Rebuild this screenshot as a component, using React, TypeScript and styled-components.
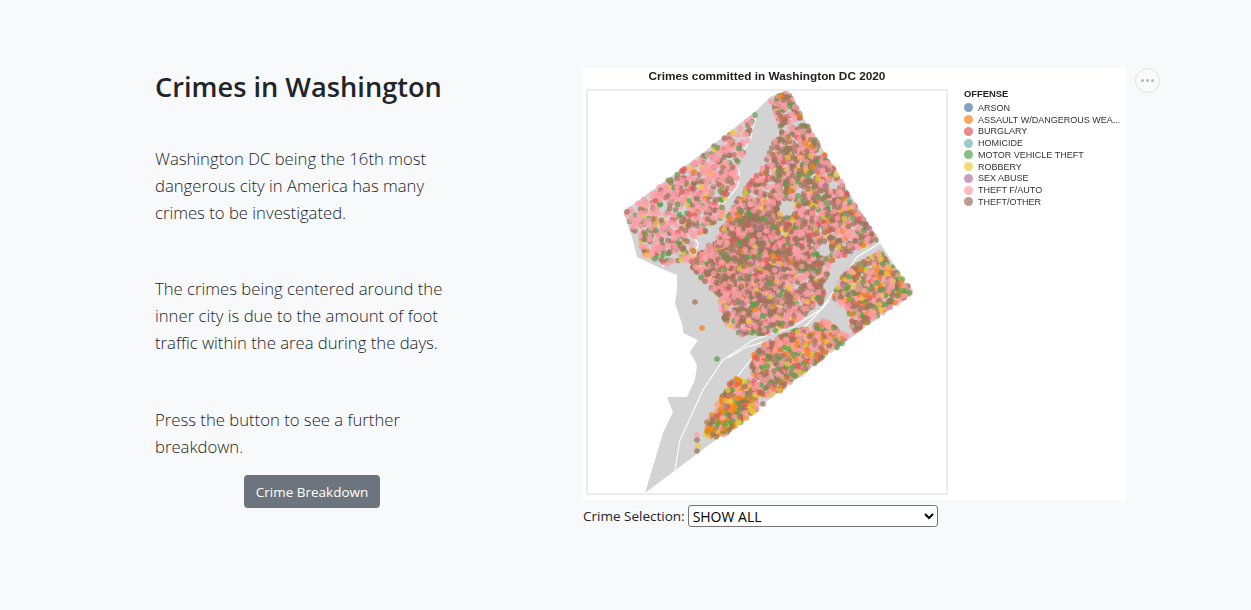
import styled, { createGlobalStyle } from 'styled-components';

type Pt = [number, number];

const OFFENSES = [
  { name: 'ARSON', color: '#4c78a8' },
  { name: 'ASSAULT W/DANGEROUS WEA...', color: '#f58518' },
  { name: 'BURGLARY', color: '#e45756' },
  { name: 'HOMICIDE', color: '#72b7b2' },
  { name: 'MOTOR VEHICLE THEFT', color: '#54a24b' },
  { name: 'ROBBERY', color: '#eeca3b' },
  { name: 'SEX ABUSE', color: '#b279a2' },
  { name: 'THEFT F/AUTO', color: '#ff9da6' },
  { name: 'THEFT/OTHER', color: '#9d755d' },
];

// coordinates below are page pixels, the svg viewBox lines them up
const DISTRICT: Pt[] = [
  [785, 91], [803, 117], [880, 243], [912, 292], [645, 493], [663, 433], [673, 412], [667, 397],
  [687, 397], [695, 380], [697, 365], [690, 352], [698, 340], [683, 333], [683, 327], [675, 303], [677, 290],
  [677, 275], [660, 268], [637, 257], [632, 237], [623, 212], [700, 155], [757, 110], [770, 97],
];

const ROADS = [
  'M757 113 L750 140 L737 163 L735 183 L720 203 L712 225',
  'M880 243 L857 257 L837 287 L820 310 L793 327 L753 340 L723 360 L703 390 L680 440 L675 470',
  'M830 300 L800 332 L747 347 L728 358',
  'M737 377 L753 357',
  'M733 160 Q745 175 735 190 L722 205',
  'M667 240 L663 267',
  'M693 238 Q702 243 695 250',
  'M623 212 L630 235 L636 256',
  'M796 205 L798 232 L812 236',
  'M845 300 L862 276 L875 268',
  'M762 325 L780 310',
  'M826 350 L838 362',
];

// weights follow the OFFENSES order
const NORTH = [0, 2, 3, 0, 8, 3, 0, 60, 24];
const CENTER = [0, 3, 5, 0, 7, 5, 1, 40, 39];
const CORE = [0, 2, 4, 0, 6, 3, 1, 26, 58];
const EAST = [0, 11, 6, 0, 14, 9, 1, 38, 21];
const SOUTH = [0, 24, 5, 0, 17, 17, 2, 17, 18];

const REGIONS: { poly: Pt[]; count: number; mix: number[] }[] = [
  {
    poly: [[625, 213], [757, 113], [745, 150], [735, 168], [738, 180], [722, 205], [725, 215], [710, 230], [700, 235], [690, 262], [668, 265], [645, 255], [635, 235]],
    count: 700,
    mix: NORTH,
  },
  { poly: [[770, 100], [787, 92], [803, 117], [780, 127]], count: 110, mix: NORTH },
  {
    poly: [[780, 130], [807, 125], [877, 240], [830, 262], [822, 302], [790, 325], [765, 335], [740, 335], [722, 320], [718, 295], [695, 275], [690, 262], [715, 240], [737, 200], [760, 170]],
    count: 2900,
    mix: CENTER,
  },
  { poly: [[715, 245], [745, 205], [775, 215], [790, 262], [760, 300], [725, 295]], count: 750, mix: CORE },
  { poly: [[845, 270], [880, 252], [910, 288], [911, 293], [853, 333], [847, 310], [833, 297]], count: 680, mix: EAST },
  { poly: [[750, 357], [770, 340], [825, 320], [850, 338], [793, 380], [772, 397], [755, 393]], count: 760, mix: EAST },
  { poly: [[733, 378], [750, 380], [757, 393], [757, 410], [722, 436], [707, 438], [705, 425]], count: 360, mix: SOUTH },
];

const HOLES: [number, number, number][] = [
  [787, 208, 9], [800, 190, 5], [833, 185, 6], [700, 240, 6], [824, 250, 8], [832, 358, 9], [668, 218, 4], [770, 262, 3],
];

const STRAYS: [number, number, number][] = [
  [695, 302, 8], [702, 328, 1], [717, 359, 4], [697, 435, 7], [697, 440, 8], [698, 446, 5], [697, 451, 8], [734, 405, 1], [763, 404, 8],
];

const inside = ([x, y]: Pt, poly: Pt[]) => {
  let hit = false;
  for (let i = 0, j = poly.length - 1; i < poly.length; j = i++) {
    const [xi, yi] = poly[i];
    const [xj, yj] = poly[j];
    if (yi > y !== yj > y && x < ((xj - xi) * (y - yi)) / (yj - yi) + xi) hit = !hit;
  }
  return hit;
};

const makeDots = () => {
  let seed = 20200;
  const rand = () => {
    seed = (seed * 1664525 + 1013904223) % 4294967296;
    return seed / 4294967296;
  };
  const dots: { x: number; y: number; kind: number }[] = [];
  REGIONS.forEach(({ poly, count, mix }) => {
    const xs = poly.map((p) => p[0]);
    const ys = poly.map((p) => p[1]);
    const total = mix.reduce((a, b) => a + b, 0);
    let placed = 0;
    let guard = 0;
    while (placed < count && guard < count * 30) {
      guard++;
      const x = Math.min(...xs) + rand() * (Math.max(...xs) - Math.min(...xs));
      const y = Math.min(...ys) + rand() * (Math.max(...ys) - Math.min(...ys));
      if (!inside([x, y], poly)) continue;
      if (HOLES.some(([hx, hy, r]) => (hx - x) ** 2 + (hy - y) ** 2 < r * r)) continue;
      let pick = rand() * total;
      let kind = 0;
      while (pick > mix[kind]) {
        pick -= mix[kind];
        kind++;
      }
      dots.push({ x, y, kind });
      placed++;
    }
  });
  // painted in shuffled order so no colour sits on top of the others
  for (let i = dots.length - 1; i > 0; i--) {
    const j = Math.floor(rand() * (i + 1));
    [dots[i], dots[j]] = [dots[j], dots[i]];
  }
  return dots;
};

const DOTS = makeDots();

const GlobalStyle = createGlobalStyle`
  html, body {
    margin: 0;
    background: #f8f9fa;
  }
`;

const Page = styled.main`
  display: grid;
  grid-template-columns: 314px auto;
  column-gap: 113px;
  align-items: start;
  box-sizing: border-box;
  min-height: 610px;
  padding: 68px 0 0 155px;
  font-family: 'Open Sans', 'Liberation Sans', sans-serif;
  color: #212529;
`;

const Intro = styled.section`
  display: flex;
  flex-direction: column;
`;

const Heading = styled.h1`
  margin: 0 0 40px;
  font-size: 27.2px;
  line-height: 37px;
  font-weight: 600;
  white-space: nowrap;
`;

const Lead = styled.p<{ $gap: number }>`
  margin: 0 0 ${(p) => p.$gap}px;
  font-size: 16.7px;
  line-height: 27px;
  font-weight: 300;
  white-space: nowrap;
`;

const BreakdownButton = styled.button`
  align-self: center;
  width: 136px;
  height: 33px;
  padding: 0;
  border: 0;
  border-radius: 4px;
  background: #6c757d;
  color: #fff;
  font-family: inherit;
  font-size: 13.5px;
`;

const ChartColumn = styled.section`
  display: flex;
  flex-direction: column;
  align-items: flex-start;
`;

const ChartRow = styled.div`
  display: flex;
  align-items: flex-start;
  gap: 9px;
`;

const ChartCard = styled.figure`
  width: 544px;
  height: 432px;
  margin: 0;
  background: #fff;
  font-family: 'Liberation Sans', Arial, sans-serif;
  filter: blur(0.25px);
`;

const ChartTitle = styled.figcaption`
  width: 370px;
  height: 21px;
  text-align: center;
  font-size: 11.8px;
  line-height: 17px;
  font-weight: 700;
  color: #222;
`;

const ChartBody = styled.div`
  display: flex;
  align-items: flex-start;
  padding-left: 4px;
`;

const PlotFrame = styled.div`
  width: 358px;
  height: 402px;
  border: 2px solid #ececec;
`;

const Map = styled.svg`
  display: block;
`;

const Legend = styled.div`
  display: flex;
  flex-direction: column;
  margin-left: 16px;
`;

const LegendTitle = styled.div`
  height: 12px;
  margin-bottom: 1px;
  font-size: 9.4px;
  line-height: 10px;
  font-weight: 700;
  color: #222;
`;

const LegendItem = styled.div`
  display: flex;
  align-items: center;
  gap: 5px;
  height: 11.75px;
  font-size: 9px;
  color: #333;
  white-space: nowrap;
`;

const Swatch = styled.span<{ $color: string }>`
  width: 9px;
  height: 9px;
  border-radius: 50%;
  background: ${(p) => p.$color};
  opacity: 0.7;
`;

const MenuButton = styled.div`
  display: flex;
  align-items: center;
  justify-content: center;
  gap: 2px;
  box-sizing: border-box;
  width: 25px;
  height: 25px;
  border: 1px solid #dfe1e4;
  border-radius: 50%;
  background: #fbfbfc;
`;

const MenuDot = styled.span`
  width: 3px;
  height: 3px;
  border-radius: 50%;
  background: #b4b6b9;
`;

const SelectRow = styled.div`
  display: flex;
  align-items: center;
  gap: 3px;
  margin: 5px 0 0 1px;
  font-size: 13.5px;
  line-height: 22px;
`;

const CrimeSelect = styled.select`
  width: 250px;
  height: 22px;
  padding: 0;
  border: 1px solid #767676;
  border-radius: 3px;
  background: #fff;
  color: #000;
  font-family: inherit;
  font-size: 14px;
`;

const App = () => (
  <>
    <GlobalStyle />
    <Page>
      <Intro>
        <Heading>Crimes in Washington</Heading>
        <Lead $gap={49}>
          Washington DC being the 16th most
          <br />
          dangerous city in America has many
          <br />
          crimes to be investigated.
        </Lead>
        <Lead $gap={50}>
          The crimes being centered around the
          <br />
          inner city is due to the amount of foot
          <br />
          traffic within the area during the days.
        </Lead>
        <Lead $gap={15}>
          Press the button to see a further
          <br />
          breakdown.
        </Lead>
        <BreakdownButton>Crime Breakdown</BreakdownButton>
      </Intro>
      <ChartColumn>
        <ChartRow>
          <ChartCard>
            <ChartTitle>Crimes committed in Washington DC 2020</ChartTitle>
            <ChartBody>
              <PlotFrame>
                <Map width={358} height={402} viewBox="588 91 358 402">
                  <polygon points={DISTRICT.map((p) => p.join(',')).join(' ')} fill="#d3d3d3" />
                  {ROADS.map((d) => (
                    <path key={d} d={d} fill="none" stroke="#fff" strokeWidth={1.1} />
                  ))}
                  {DOTS.map((dot, i) => (
                    <circle key={i} cx={dot.x} cy={dot.y} r={2.8} fill={OFFENSES[dot.kind].color} opacity={0.7} />
                  ))}
                  {STRAYS.map(([x, y, kind]) => (
                    <circle key={`${x}-${y}`} cx={x} cy={y} r={2.8} fill={OFFENSES[kind].color} opacity={0.75} />
                  ))}
                </Map>
              </PlotFrame>
              <Legend>
                <LegendTitle>OFFENSE</LegendTitle>
                {OFFENSES.map((o) => (
                  <LegendItem key={o.name}>
                    <Swatch $color={o.color} />
                    {o.name}
                  </LegendItem>
                ))}
              </Legend>
            </ChartBody>
          </ChartCard>
          <MenuButton>
            <MenuDot />
            <MenuDot />
            <MenuDot />
          </MenuButton>
        </ChartRow>
        <SelectRow>
          <label htmlFor="crime">Crime Selection:</label>
          <CrimeSelect id="crime" defaultValue="SHOW ALL">
            <option>SHOW ALL</option>
            {OFFENSES.map((o) => (
              <option key={o.name}>{o.name}</option>
            ))}
          </CrimeSelect>
        </SelectRow>
      </ChartColumn>
    </Page>
  </>
);

export default App;
